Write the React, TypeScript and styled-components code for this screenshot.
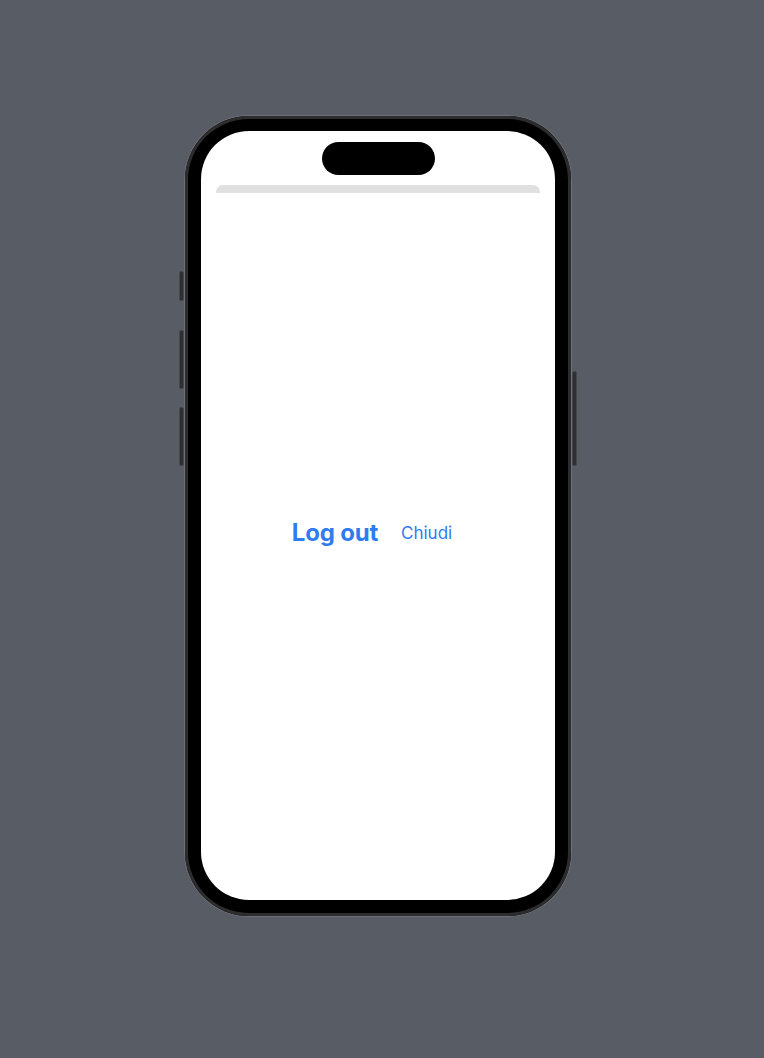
import React from 'react';
import styled, { createGlobalStyle } from 'styled-components';

const GlobalStyle = createGlobalStyle`
  html, body {
    margin: 0;
    padding: 0;
    background: #585c64;
  }
  body {
    font-family: Inter, "Noto Sans", sans-serif;
  }
`;

const Page = styled.div`
  width: 764px;
  height: 1058px;
  box-sizing: border-box;
  padding: 116px 0 0 185px;
  background: #585c64;
`;

const Phone = styled.div`
  position: relative;
  width: 386px;
  height: 800px;
  box-sizing: border-box;
  padding: 15px 16px 16px 16px;
  border-radius: 64px;
  background: #000;
  box-shadow: 0 0 0 1px #6d7077, inset 0 0 0 3px #2c2c2e;
`;

// hardware buttons stick out of the frame edge
const SideButton = styled.div<{ $side: 'left' | 'right'; $top: number; $height: number }>`
  position: absolute;
  top: ${p => p.$top}px;
  ${p => (p.$side === 'left' ? 'left: -6px;' : 'right: -6px;')}
  width: 5px;
  height: ${p => p.$height}px;
  border-radius: 2px;
  background: #2e2f32;
  border: 1px solid #45474b;
  box-sizing: border-box;
`;

const Screen = styled.div`
  width: 100%;
  height: 100%;
  border-radius: 48px;
  background: #fff;
  overflow: hidden;
  display: flex;
  flex-direction: column;
  align-items: stretch;
  gap: 10px;
  padding-top: 11px;
  box-sizing: border-box;
`;

const Island = styled.div`
  align-self: center;
  width: 113px;
  height: 33px;
  border-radius: 17px;
  background: #000;
`;

const Sheet = styled.div`
  flex: 1;
  margin: 0 15px;
  display: flex;
  flex-direction: column;
`;

const SheetBar = styled.div`
  height: 8px;
  background: #e0e0e0;
  border-radius: 7px 7px 0 0;
`;

const Content = styled.div`
  flex: 1;
  display: flex;
  align-items: center;
  justify-content: center;
  gap: 23px;
  padding: 0 12px 28px 0;
`;

const Button = styled.span<{ $bold?: boolean }>`
  color: #2f7cf0;
  font-size: ${p => (p.$bold ? '24px' : '17px')};
  font-weight: ${p => (p.$bold ? 700 : 400)};
  letter-spacing: ${p => (p.$bold ? '-0.2px' : '0')};
`;

export default function App() {
  return (
    <>
      <GlobalStyle />
      <Page>
        <Phone>
          <SideButton $side="left" $top={155} $height={30} />
          <SideButton $side="left" $top={214} $height={59} />
          <SideButton $side="left" $top={291} $height={59} />
          <SideButton $side="right" $top={255} $height={95} />
          <Screen>
            <Island />
            <Sheet>
              <SheetBar />
              <Content>
                <Button $bold>Log out</Button>
                <Button>Chiudi</Button>
              </Content>
            </Sheet>
          </Screen>
        </Phone>
      </Page>
    </>
  );
}
